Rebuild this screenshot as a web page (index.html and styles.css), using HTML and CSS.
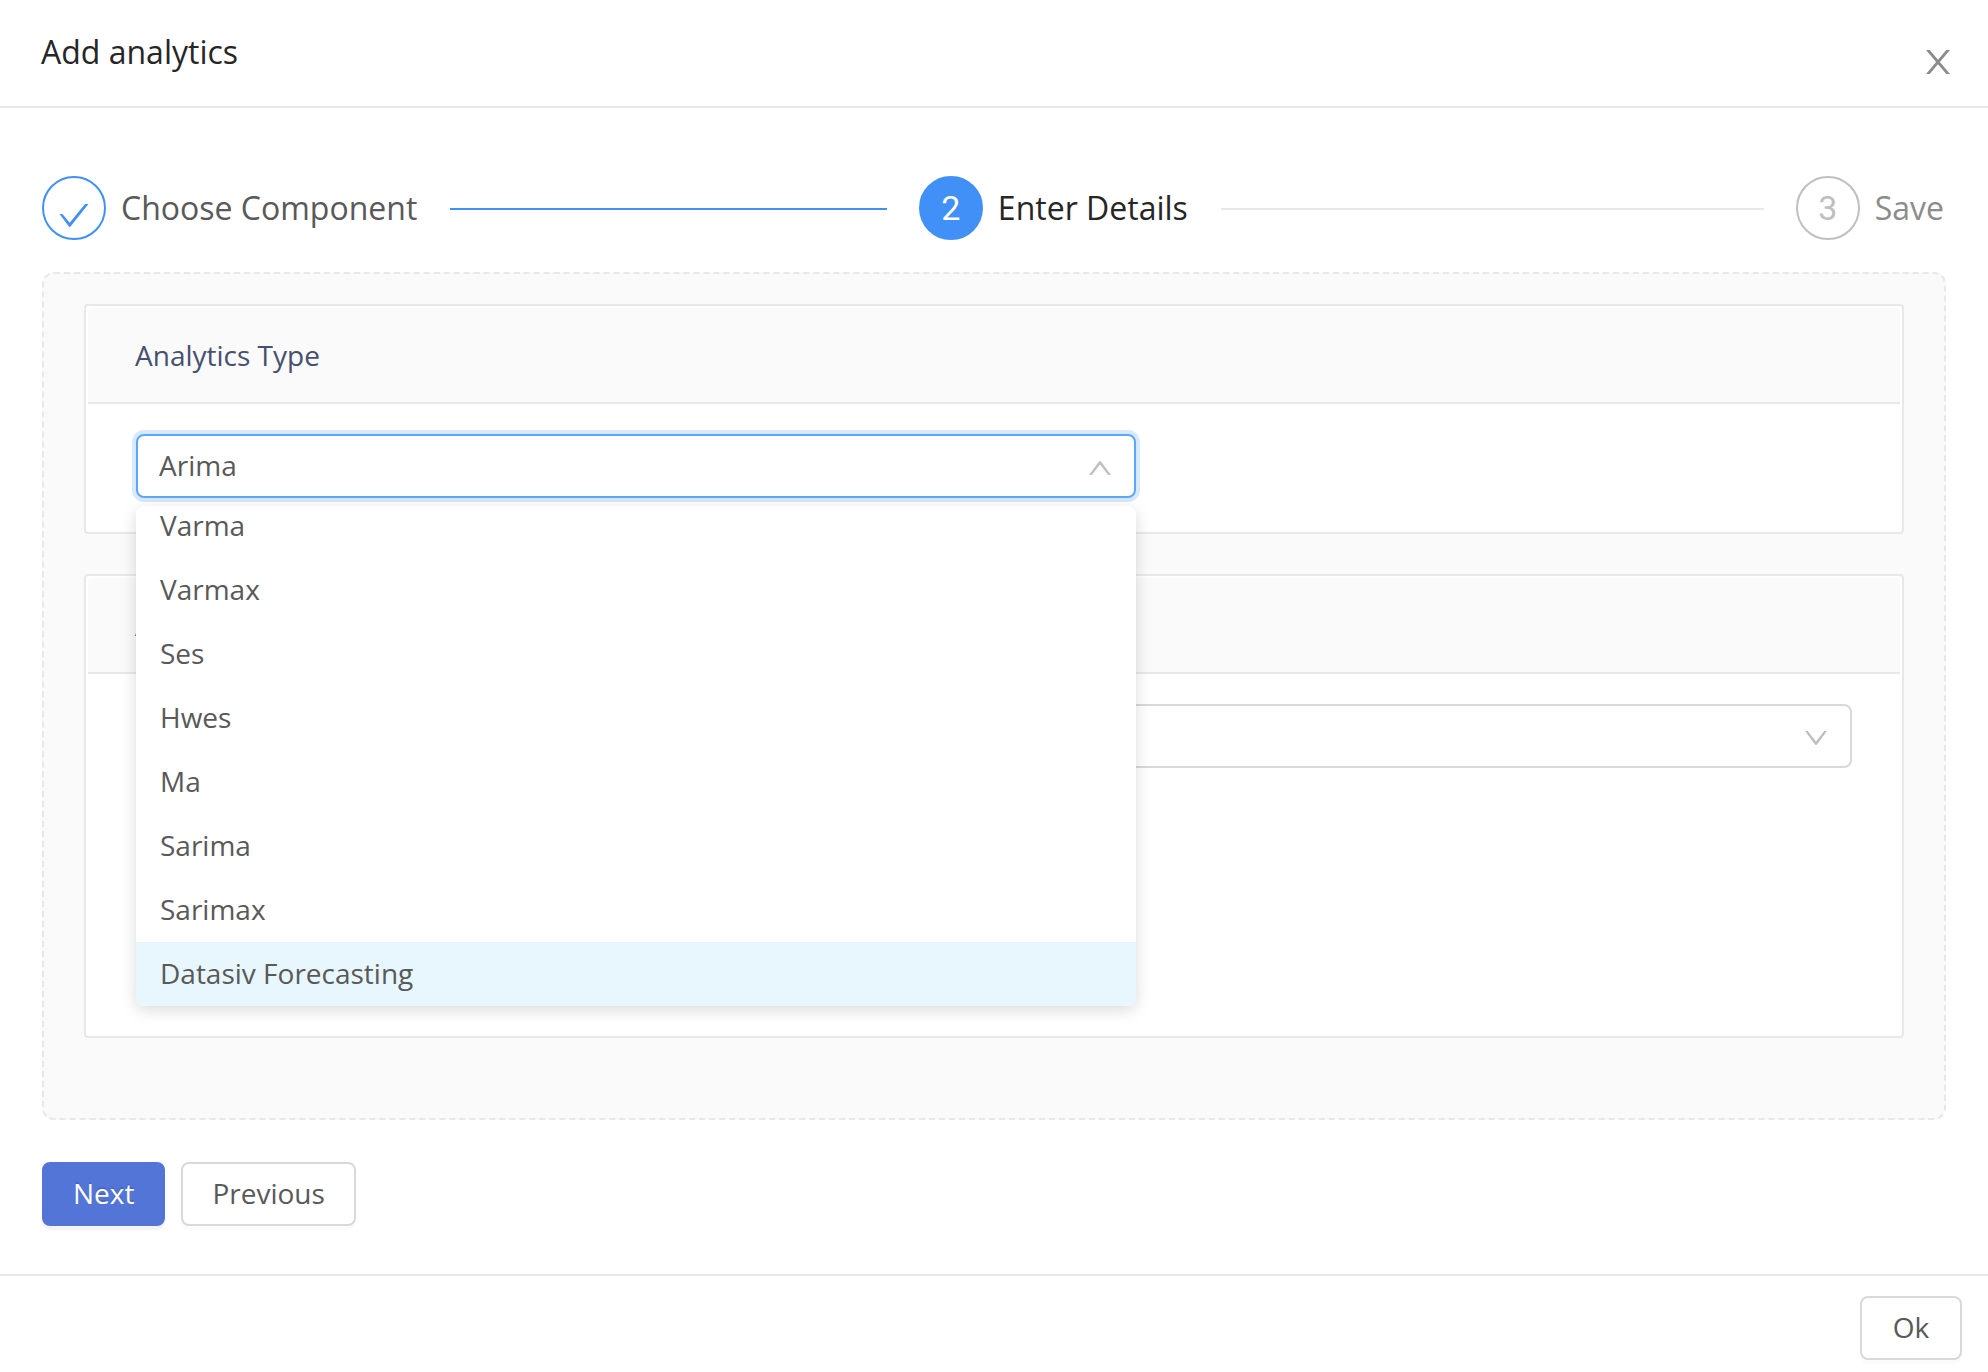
FILE: index.html
```html
<!DOCTYPE html>
<html lang="en">
<head>
<meta charset="utf-8">
<title>Add analytics</title>
<link rel="stylesheet" href="styles.css">
</head>
<body>
<div class="modal" role="dialog" aria-labelledby="modal-title">
  <header class="modal-header">
    <h1 class="modal-title" id="modal-title">Add analytics</h1>
    <button class="close" type="button" aria-label="Close">
      <svg class="close-icon" viewBox="0 0 24 24" aria-hidden="true"><path d="M0 0h3.700L12 9.700 20.300 0H24L13.900 12 24 24h-3.700L12 14.300 3.700 24H0l10.100-12z"/></svg>
    </button>
  </header>

  <main class="modal-body">
    <ol class="steps">
      <li class="step step-done">
        <span class="step-icon">
          <svg class="check-icon" viewBox="0 0 30 24" aria-hidden="true"><path d="M.5 10h2.400q.6 0 1 .5l6.800 8.300L25.600.5q.4-.5 1-.5H29.500L11.300 22.700q-.6.800-1.200 0z"/></svg>
        </span>
        <span class="step-title">Choose Component</span>
        <span class="step-line"></span>
      </li>
      <li class="step step-current" aria-current="step">
        <span class="step-icon">2</span>
        <span class="step-title">Enter Details</span>
        <span class="step-line"></span>
      </li>
      <li class="step step-wait">
        <span class="step-icon">3</span>
        <span class="step-title">Save</span>
      </li>
    </ol>

    <div class="panel">
      <section class="card">
        <h2 class="card-header"><label for="analytics-type">Analytics Type</label></h2>
        <div class="card-body">
          <div class="select-wrap select-open">
            <select class="select" id="analytics-type">
              <option>Arima</option>
              <option>Varma</option>
              <option>Varmax</option>
              <option>Ses</option>
              <option>Hwes</option>
              <option>Ma</option>
              <option>Sarima</option>
              <option>Sarimax</option>
              <option>Datasiv Forecasting</option>
            </select>
            <svg class="arrow" viewBox="0 0 22 14" aria-hidden="true"><path d="M0 14 9.800.8q1.200-1.400 2.400 0L22 14h-2.800L11 3.400 2.800 14z"/></svg>
            <ul class="dropdown" role="listbox" aria-label="Analytics Type">
              <li class="option" role="option">Varma</li>
              <li class="option" role="option">Varmax</li>
              <li class="option" role="option">Ses</li>
              <li class="option" role="option">Hwes</li>
              <li class="option" role="option">Ma</li>
              <li class="option" role="option">Sarima</li>
              <li class="option" role="option">Sarimax</li>
              <li class="option option-active" role="option">Datasiv Forecasting</li>
            </ul>
          </div>
        </div>
      </section>

      <section class="card card-tall">
        <h2 class="card-header"><label for="component">A</label></h2>
        <div class="card-body">
          <div class="select-wrap">
            <select class="select" id="component"></select>
            <svg class="arrow" viewBox="0 0 22 14" aria-hidden="true"><path d="M0 0 9.800 13.200q1.200 1.400 2.400 0L22 0h-2.800L11 10.600 2.800 0z"/></svg>
          </div>
        </div>
      </section>
    </div>

    <div class="actions">
      <button class="btn btn-primary" type="button">Next</button>
      <button class="btn" type="button">Previous</button>
    </div>
  </main>

  <footer class="modal-footer">
    <button class="btn" type="button">Ok</button>
  </footer>
</div>
</body>
</html>
```
FILE: styles.css
```css
* {
  box-sizing: border-box;
}

body {
  margin: 0;
  background: #fff;
  color: #595959;
  font: 28px/42px "Open Sans", "Noto Sans", sans-serif;
}

h1,
h2,
ol,
ul {
  margin: 0;
  padding: 0;
  font: inherit;
  list-style: none;
}

.modal-header {
  display: flex;
  justify-content: space-between;
  height: 108px;
  padding: 30px 38px 0 41px;
  border-bottom: 2px solid #e8e8e8;
}

.modal-title {
  color: #262626;
  font-size: 32px;
  line-height: 44px;
}

.close {
  display: flex;
  align-items: center;
  height: 64px;
  padding: 0;
  border: 0;
  background: none;
}

.close-icon {
  width: 24px;
  height: 24px;
  fill: #8c8c8c;
}

.modal-body {
  padding: 68px 42px 48px;
}

.steps {
  display: flex;
  gap: 32px;
}

.step {
  display: flex;
  flex: 1 1 0;
  align-items: center;
  gap: 15px;
  font-size: 32px;
}

.step:last-child {
  flex: none;
  padding-right: 2px;
}

.step-icon {
  display: flex;
  flex: none;
  align-items: center;
  justify-content: center;
  width: 64px;
  height: 64px;
  border: 2px solid #bfbfbf;
  border-radius: 50%;
  color: #bfbfbf;
  font-family: Roboto, sans-serif;
  font-size: 34px;
}

.check-icon {
  width: 30px;
  height: 24px;
  margin-top: 16px;
  fill: #4190f7;
}

.step-line {
  flex: 1;
  height: 2px;
  margin: 2px 0 0 18px;
  background: #e8e8e8;
}

.step-done .step-icon {
  border-color: #4190f7;
}

.step-done .step-line {
  background: #4190f7;
}

.step-current .step-icon {
  border-color: #4190f7;
  background: #4190f7;
  color: #fff;
}

.step-current .step-title {
  color: #262626;
}

.step-wait .step-title {
  color: #8c8c8c;
}

.panel {
  display: flex;
  flex-direction: column;
  gap: 40px;
  margin-top: 32px;
  padding: 30px 40px 80px;
  border: 2px dashed #e8e8e8;
  border-radius: 12px;
  background: #fafafa;
}

.card {
  padding: 2px;
  border: 2px solid #e8e8e8;
  border-radius: 4px;
  background: #fff;
}

.card-header {
  padding: 26px 48px 26px 47px;
  border-bottom: 2px solid #e8e8e8;
  border-radius: 4px 4px 0 0;
  background: #fafafa;
  color: #47506f;
}

.card-body {
  padding: 30px 48px 32px;
}

.card-tall {
  min-height: 464px;
}

.select-wrap {
  display: flex;
  position: relative;
}

.select-open {
  max-width: 1000px;
}

.select {
  width: 100%;
  height: 64px;
  padding: 0 21px 2px;
  appearance: none;
  border: 2px solid #d9d9d9;
  border-radius: 8px;
  background: #fff;
  color: #595959;
  font: inherit;
}

.select-open .select {
  border-color: #5ba7f8;
  box-shadow: 0 0 0 4px #d9e9fd;
}

.arrow {
  position: absolute;
  top: 27px;
  right: 25px;
  width: 22px;
  height: 14px;
  fill: #bfbfbf;
}

.dropdown {
  display: flex;
  position: absolute;
  z-index: 1;
  top: 72px;
  left: 0;
  flex-direction: column;
  justify-content: flex-end;
  width: 100%;
  height: 500px;
  overflow: hidden;
  border-radius: 8px;
  background: #fff;
  box-shadow: 0 4px 16px rgba(0, 0, 0, 0.15);
}

.option {
  flex: none;
  padding: 10px 24px 12px;
}

.option-active {
  background: #e8f6fe;
}

.actions {
  display: flex;
  gap: 16px;
  margin-top: 42px;
}

.btn {
  min-width: 102px;
  height: 64px;
  padding: 0 29px 2px;
  border: 2px solid #d9d9d9;
  border-radius: 8px;
  background: #fff;
  box-shadow: 0 4px 0 rgba(0, 0, 0, 0.016);
  color: #595959;
  font: inherit;
}

.btn-primary {
  border-color: #5275d7;
  background: #5275d7;
  box-shadow: 0 4px 0 rgba(0, 0, 0, 0.045);
  color: #fff;
  text-shadow: 0 -2px 0 rgba(0, 0, 0, 0.12);
}

.modal-footer {
  display: flex;
  justify-content: flex-end;
  padding: 20px 26px 12px;
  border-top: 2px solid #e8e8e8;
}
```
